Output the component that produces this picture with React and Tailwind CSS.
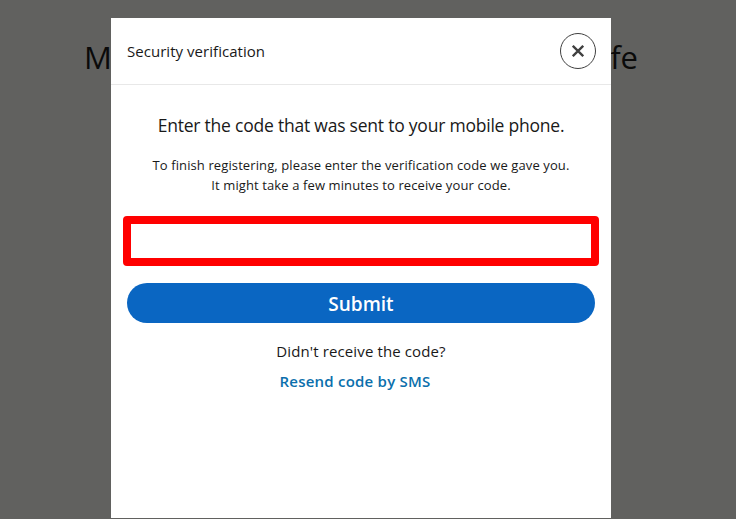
import React, { useState } from "react";

function CloseIcon() {
  return (
    <svg width="12" height="12" viewBox="0 0 12 12" fill="none" stroke="currentColor" strokeWidth="2.3">
      <path d="M0.8 0.8 L11.2 11.2 M11.2 0.8 L0.8 11.2" />
    </svg>
  );
}

export default function App() {
  const [code, setCode] = useState("");

  return (
    <div className="relative h-screen overflow-hidden bg-[#61615f] font-['Open_Sans','Noto_Sans',sans-serif] text-[#191919]">
      {/* Page behind the dialog: only the ends of the headline stick out */}
      <h1 className="ml-[84px] flex w-[554px] justify-between pt-[37px] text-[31px] leading-[40px] text-[#0a0a0a]">
        <span>M</span>
        <span>fe</span>
      </h1>

      {/* Dialog */}
      <div className="absolute inset-0 flex items-start pt-[18px] pl-[111px]">
        <div className="flex h-[500px] w-[500px] flex-col bg-white">
          <header className="flex h-[67px] items-center justify-between border-b border-[#e8e8e8] pr-[15px] pl-4">
            <h2 className="text-[15px] leading-5 tracking-[0.04px] whitespace-nowrap">Security verification</h2>
            <button
              type="button"
              aria-label="Close"
              className="flex size-9 items-center justify-center rounded-full border border-[#404040] text-[#404040]"
            >
              <CloseIcon />
            </button>
          </header>

          <form
            className="flex flex-col items-center px-3 pt-[28px]"
            onSubmit={(e) => e.preventDefault()}
          >
            <p className="text-[17.5px] leading-6 tracking-[-0.22px] whitespace-nowrap">
              Enter the code that was sent to your mobile phone.
            </p>
            <p className="mt-[18px] text-center text-[13px] leading-5 tracking-[0.11px] whitespace-nowrap">
              To finish registering, please enter the verification code we gave you.
              <br />
              It might take a few minutes to receive your code.
            </p>
            <input
              type="text"
              value={code}
              onChange={(e) => setCode(e.target.value)}
              className="mt-[21px] h-[50px] w-[476px] rounded border-8 border-[#ff0000] bg-white px-2 outline-none"
            />
            <button
              type="submit"
              className="mt-[17px] h-10 w-[468px] rounded-full bg-[#0a66c2] pt-0.5 text-[19px] leading-6 font-semibold text-white"
            >
              Submit
            </button>
            <p className="mt-[18px] text-[15px] leading-5 tracking-[0.12px] whitespace-nowrap">Didn't receive the code?</p>
            <button
              type="button"
              className="mt-[10px] mr-[12px] text-[15px] leading-5 font-semibold tracking-[0.22px] whitespace-nowrap text-[#0b6fac]"
            >
              Resend code by SMS
            </button>
          </form>
        </div>
      </div>
    </div>
  );
}
